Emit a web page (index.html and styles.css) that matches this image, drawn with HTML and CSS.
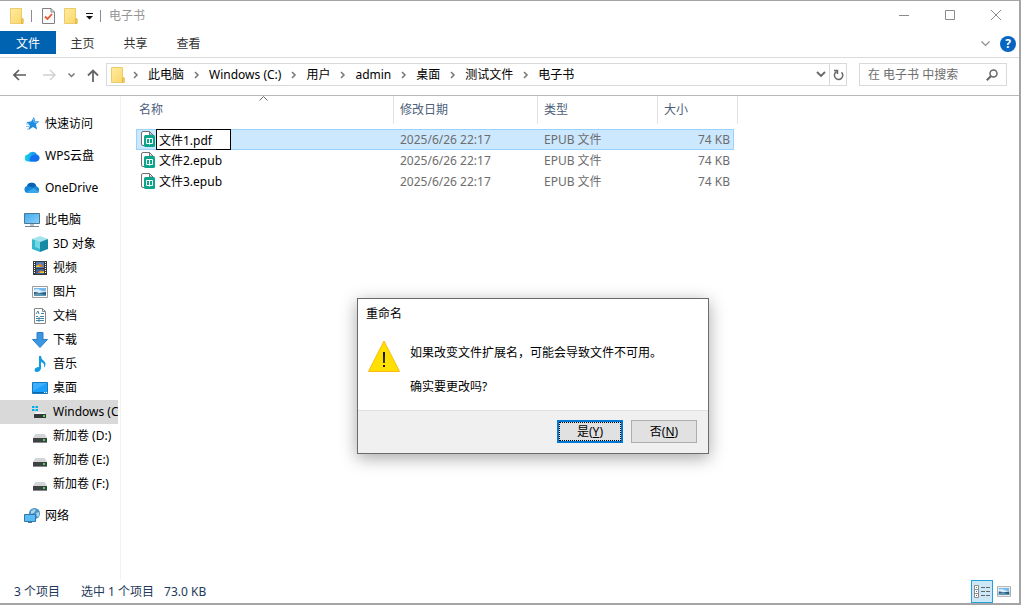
FILE: index.html
```html
<!doctype html>
<html lang="zh-CN">
<head>
    <meta charset="UTF-8">
    <meta name="viewport" content="width=device-width, initial-scale=1.0">
    <title>电子书</title>
    <link rel="stylesheet" href="styles.css">
</head>
<body>
<svg class="defs" aria-hidden="true">
    <defs>
        <linearGradient id="gold" x1="0" y1="0" x2="1" y2="1">
            <stop offset="0" stop-color="#ffeca0"/>
            <stop offset="1" stop-color="#fbd568"/>
        </linearGradient>
        <linearGradient id="screen" x1="0" y1="0" x2="1" y2="1">
            <stop offset="0" stop-color="#3fa9ee"/>
            <stop offset="1" stop-color="#8bd2fb"/>
        </linearGradient>
        <linearGradient id="wps" x1="0" y1="0" x2="1" y2="0">
            <stop offset="0" stop-color="#16d3e4"/>
            <stop offset="1" stop-color="#1479f5"/>
        </linearGradient>
    </defs>
    <symbol id="folder" viewBox="0 0 14 16">
        <path d="M.5.5h11v10h1.500v5H.5z" fill="url(#gold)" stroke="#eccb6b"/>
        <path d="M11.500 15.500v-4.500h1.500v4.500z" fill="#f9d76f" stroke="#e2b849"/>
    </symbol>
    <symbol id="crumb" viewBox="0 0 6 8">
        <path d="M1 1l3 3-3 3" fill="none" stroke="#777" stroke-width="1.500"/>
    </symbol>
    <symbol id="book" viewBox="0 0 14 16">
        <path d="M3 14.500H2A1.500 1.500 0 0 1 .5 13V2A1.500 1.500 0 0 1 2 .5h6.500l3.500 3.500v1M8.500.5V4H12" fill="#fff" stroke="#707070"/>
        <rect x="3" y="4" width="11" height="12" rx="1.500" fill="#0ca58b"/>
        <path d="M5.500 7.500h6v5h-6zM8.500 7.500v6" fill="none" stroke="#fff"/>
    </symbol>
    <symbol id="drive" viewBox="0 0 14 9">
        <path d="M2.500 0h9L14 4H0z" fill="#d2d4d5"/>
        <path d="M0 4h14v4H0z" fill="#3d4144"/>
        <path d="M0 8h14v1H0z" fill="#85898b"/>
        <path d="M10 5h2v2h-2z" fill="#38e848"/>
    </symbol>
    <symbol id="photo" viewBox="0 0 16 12">
        <path d="M.5.5h15v11H.5z" fill="#fff" stroke="#9b9b9b"/>
        <path d="M2 2h12v8H2z" fill="#75b9ec"/>
        <path d="M2 4q3-2 6 0t6 1v2H2z" fill="#d7edf9"/>
        <path d="M2 6q3 0 5 1l7-1v4H2z" fill="#26587c"/>
        <path d="M2 8l4-1 8 2v1H2z" fill="#5c96b3"/>
    </symbol>
</svg>

<div class="window">
    <header class="titlebar">
        <svg class="folder"><use href="#folder"/></svg>
        <span class="bar"></span>
        <button class="tool check" aria-label="属性">
            <svg width="13" height="16" viewBox="0 0 13 16">
                <path d="M.5.5h8.500l3.500 3.500v11.500H.5zM9 .5V4h3.500" fill="#fafafa" stroke="#808080"/>
                <path d="M3 8.500l2.500 2.500L10 6" fill="none" stroke="#e8542b" stroke-width="1.800"/>
            </svg>
        </button>
        <button class="tool" aria-label="新建文件夹"><svg class="folder"><use href="#folder"/></svg></button>
        <button class="tool more" aria-label="自定义快速访问工具栏">
            <svg width="7" height="7" viewBox="0 0 7 7"><path d="M0 0h7v1H0zM0 3h7L3.500 6.500z" fill="#111"/></svg>
        </button>
        <span class="bar"></span>
        <h1 class="title">电子书</h1>
        <div class="controls">
            <button class="control" aria-label="最小化"><svg width="12" height="12" viewBox="0 0 12 12"><path d="M1 5.500h10"/></svg></button>
            <button class="control" aria-label="最大化"><svg width="12" height="12" viewBox="0 0 12 12"><path d="M1.500.5h9v9h-9z"/></svg></button>
            <button class="control" aria-label="关闭"><svg width="12" height="12" viewBox="0 0 12 12"><path d="M1 0l10 10M11 0L1 10"/></svg></button>
        </div>
    </header>

    <nav class="tabs">
        <button class="tab active">文件</button>
        <button class="tab">主页</button>
        <button class="tab">共享</button>
        <button class="tab">查看</button>
        <div class="help">
            <button class="tool" aria-label="展开功能区">
                <svg width="9" height="6" viewBox="0 0 9 6"><path d="M.5.5l4 4 4-4" fill="none" stroke="#8c8c8c" stroke-width="1.200"/></svg>
            </button>
            <button class="question" aria-label="帮助">?</button>
        </div>
    </nav>

    <div class="navbar">
        <div class="arrows">
            <button class="tool" aria-label="返回"><svg width="13" height="12" viewBox="0 0 13 12"><path d="M13 6H1.500M6 1L1 6l5 5" fill="none" stroke="#5c5c5c" stroke-width="1.600"/></svg></button>
            <button class="tool" aria-label="前进"><svg width="13" height="12" viewBox="0 0 13 12"><path d="M0 6h11.500M7 1l5 5-5 5" fill="none" stroke="#d0d0d0" stroke-width="1.400"/></svg></button>
            <button class="tool recent" aria-label="最近位置"><svg width="7" height="5" viewBox="0 0 7 5"><path d="M.5.500l3 3 3-3" fill="none" stroke="#777" stroke-width="1.500"/></svg></button>
            <button class="tool" aria-label="上移"><svg width="12" height="13" viewBox="0 0 12 13"><path d="M6 13V1.500M1 6.500l5-5 5 5" fill="none" stroke="#666" stroke-width="1.800"/></svg></button>
        </div>
        <div class="address">
            <svg class="folder"><use href="#folder"/></svg>
            <svg class="crumb"><use href="#crumb"/></svg><a href="#pc">此电脑</a>
            <svg class="crumb"><use href="#crumb"/></svg><a href="#c">Windows (C:)</a>
            <svg class="crumb"><use href="#crumb"/></svg><a href="#users">用户</a>
            <svg class="crumb"><use href="#crumb"/></svg><a href="#admin">admin</a>
            <svg class="crumb"><use href="#crumb"/></svg><a href="#desktop">桌面</a>
            <svg class="crumb"><use href="#crumb"/></svg><a href="#test">测试文件</a>
            <svg class="crumb"><use href="#crumb"/></svg><a href="#books">电子书</a>
            <button class="tool drop" aria-label="历史记录"><svg width="10" height="7" viewBox="0 0 10 7"><path d="M1 1l4 4 4-4" fill="none" stroke="#666" stroke-width="1.800"/></svg></button>
            <button class="tool refresh" aria-label="刷新">
                <svg width="11" height="12" viewBox="0 0 11 12"><path d="M8.500 3.200A4.200 4.200 0 1 1 3.500 2.600M1 1.500h3.500V5" fill="none" stroke="#686868" stroke-width="1.500"/></svg>
            </button>
        </div>
        <div class="search">
            <input type="search" class="searchinput" placeholder="在 电子书 中搜索" aria-label="搜索">
            <button class="tool" aria-label="开始搜索"><svg width="12" height="12" viewBox="0 0 12 12"><circle cx="7.500" cy="4.500" r="3.500" fill="none" stroke="#666" stroke-width="1.500"/><path d="M5 7L.8 11.200" stroke="#666" stroke-width="2"/></svg></button>
        </div>
    </div>

    <main class="content">
        <nav class="sidebar">
            <a class="item top" href="#quick">
                <svg class="icon" viewBox="0 0 16 16"><path d="M10 1l1.200 4.300 4.300.1-3.600 2.800 1.200 5.300-4.200-2.600L4.500 14l1.300-4.500L2.500 6l4.600-.5z" fill="#1e8de0"/><path d="M2 8h3M2 10.500h3M3 13h2" stroke="#7dbff0"/><path d="M9.500 3l.7 3.300 3 .2" fill="none" stroke="#77c4f7"/></svg>
                快速访问</a>
            <a class="item top" href="#wps">
                <svg class="icon" viewBox="0 0 16 16"><path d="M4.500 13.500a3.500 3.500 0 0 1-.4-7 5 5 0 0 1 9-.1 3.700 3.700 0 0 1-.8 7.100z" fill="url(#wps)"/><path d="M6 13.500a5 5 0 0 1 9.500-3.500 3.700 3.700 0 0 1-3.200 3.500z" fill="#146ff0"/></svg>
                WPS云盘</a>
            <a class="item top" href="#onedrive">
                <svg class="icon" viewBox="0 0 16 16"><path d="M3.500 13A3.600 3.600 0 0 1 3 6a5 5 0 0 1 9.500.5A3.400 3.400 0 0 1 13 13z" fill="#1687d9"/><path d="M3 6a5 5 0 0 1 9.500.5q-1.600-.5-3 .9z" fill="#0b62b4"/><path d="M2 12.500l8-4.500 5 4q-1 1-2 1H4z" fill="#38a7eb"/></svg>
                OneDrive</a>
            <a class="item top" href="#pc">
                <svg class="icon" viewBox="0 0 16 16"><path d="M.5 1.500h15v10H.5z" fill="url(#screen)" stroke="#4c7692"/><path d="M6 12h4v2H6z" fill="#b4c3cc"/><path d="M1 14.500h14" stroke="#75838c"/></svg>
                此电脑</a>
            <a class="item" href="#3d">
                <svg class="icon" viewBox="0 0 16 16"><path d="M0 3l8-3 8 3-8 3z" fill="#a4e4ed"/><path d="M0 3l8 3v10l-8-3z" fill="#35b8cd"/><path d="M16 3L8 6v10l8-3z" fill="#168aa5"/><path d="M3 4l5 2v7l-5-2z" fill="#70d7e5"/></svg>
                3D 对象</a>
            <a class="item" href="#video">
                <svg class="icon" viewBox="0 0 16 16"><path d="M1 1h14v14H1z" fill="#383838"/><path d="M4 2h8v6H4z" fill="#497dc1"/><path d="M4 9h8v5H4z" fill="#3a62a1"/><path d="M5 6l3-3 3 3v1H5zM6 12l3-2 2 3H6z" fill="#df7a2b"/><path d="M4 6l2-1 2 2H4zM8 12l4-1v2H8z" fill="#e5cb37"/><path d="M2.500 2v12M13.500 2v12" stroke="#fff" stroke-dasharray="1 1"/></svg>
                视频</a>
            <a class="item" href="#pictures"><svg class="icon"><use href="#photo"/></svg>图片</a>
            <a class="item" href="#documents">
                <svg class="icon" viewBox="0 0 16 16"><path d="M2.500.5h8l3 3v12h-11zM10.500.5v3h3" fill="#fff" stroke="#888"/><path d="M4 6l2-3 1 3M9 5.500h3M4 8.500h2M8 8.500h4M4 10.500h8M4 12.500h8M7 14v-5" fill="none" stroke="#4288ac"/></svg>
                文档</a>
            <a class="item" href="#downloads">
                <svg class="icon" viewBox="0 0 16 16"><path d="M5 .5h6v7h4.500L8 15.500.5 7.500H5z" fill="#3a96df" stroke="#2b7fc7"/></svg>
                下载</a>
            <a class="item" href="#music">
                <svg class="icon" viewBox="0 0 16 16"><path d="M7 0h2q0 3 3 5 3 3 0 7 1-5-3-6v6.500q-1 3.500-4.500 3.500-2-.2-2-2Q3 11 7 11z" fill="#109be2"/></svg>
                音乐</a>
            <a class="item" href="#desktop">
                <svg class="icon" viewBox="0 0 16 16"><path d="M.5 2.500h15v11H.5z" fill="#1a9ffb" stroke="#1478bb"/><path d="M1 3h14L1 11z" fill="#3caffe"/><path d="M1 12.500h11" stroke="#1169a8"/><path d="M12 12.500h3" stroke="#fff" stroke-dasharray="1 1"/></svg>
                桌面</a>
            <a class="item selected" href="#c">
                <svg class="icon" viewBox="0 0 16 16"><path d="M0 2h2.500v2H0zM3.500 2H6v2H3.500zM0 5h2.500v2H0zM3.500 5H6v2H3.500z" fill="#00aeea"/><path d="M4 8h8l2 2H2z" fill="#f0f0f0"/><path d="M2 10h12v4H2z" fill="#34383a"/><path d="M11 11h2v2h-2z" fill="#39e64a"/></svg>
                Windows (C:)</a>
            <a class="item" href="#d"><svg class="icon drive"><use href="#drive"/></svg>新加卷 (D:)</a>
            <a class="item" href="#e"><svg class="icon drive"><use href="#drive"/></svg>新加卷 (E:)</a>
            <a class="item" href="#f"><svg class="icon drive"><use href="#drive"/></svg>新加卷 (F:)</a>
            <a class="item top" href="#network">
                <svg class="icon" viewBox="0 0 16 16"><circle cx="10.500" cy="5.500" r="5.500" fill="#4b91c5"/><path d="M7 3q3-3 5-1l-2 3-3 1zM12 5l3-1v4l-2 1z" fill="#a8d4ea"/><path d="M.5 6.500h11v7H.5z" fill="#5abcf5" stroke="#2f78a8"/><path d="M4 14h4v1H4z" fill="#567d94"/></svg>
                网络</a>
        </nav>

        <section class="files">
            <table class="list">
                <colgroup>
                    <col class="colname"><col class="coldate"><col class="coltype"><col class="colsize"><col class="colend">
                </colgroup>
                <thead>
                <tr>
                    <th>名称<svg class="sort" viewBox="0 0 9 5"><path d="M.5 4.500l4-4 4 4" fill="none" stroke="#666"/></svg></th>
                    <th>修改日期</th>
                    <th>类型</th>
                    <th colspan="2">大小</th>
                </tr>
                </thead>
                <tbody>
                <tr class="chosen">
                    <td><div class="name"><svg class="book"><use href="#book"/></svg><input class="rename" type="text" value="文件1.pdf" aria-label="文件名"></div></td>
                    <td>2025/6/26 22:17</td>
                    <td>EPUB 文件</td>
                    <td class="size">74 KB</td>
                </tr>
                <tr>
                    <td><div class="name"><svg class="book"><use href="#book"/></svg><span>文件2.epub</span></div></td>
                    <td>2025/6/26 22:17</td>
                    <td>EPUB 文件</td>
                    <td class="size">74 KB</td>
                </tr>
                <tr>
                    <td><div class="name"><svg class="book"><use href="#book"/></svg><span>文件3.epub</span></div></td>
                    <td>2025/6/26 22:17</td>
                    <td>EPUB 文件</td>
                    <td class="size">74 KB</td>
                </tr>
                </tbody>
            </table>
        </section>
    </main>

    <footer class="status">
        <span>3 个项目</span>
        <span>选中 1 个项目</span>
        <span>73.0 KB</span>
        <div class="views">
            <button class="view on" aria-label="详细信息">
                <svg width="16" height="13" viewBox="0 0 16 13"><path d="M.5.5h4v12h-4zM.5 4.500h4M.5 8.500h4" fill="#fff" stroke="#8d8d8d"/><path d="M7 2.500h4M12 2.500h4M7 6.500h4M12 6.500h4M7 10.500h4M12 10.500h4" stroke="#666"/><path d="M2 2h1v1H2z" fill="#4a9a4a"/><path d="M2 6h1v1H2z" fill="#3572c0"/><path d="M2 10h1v1H2z" fill="#c33"/></svg>
            </button>
            <button class="view" aria-label="大缩略图"><svg width="14" height="11"><use href="#photo"/></svg></button>
        </div>
    </footer>
</div>

<div class="dialog" role="dialog" aria-labelledby="dialogtitle">
    <h2 class="dialogtitle" id="dialogtitle">重命名</h2>
    <div class="message">
        <svg class="warning" viewBox="0 0 32 32">
            <path d="M16 1L31.500 31.500H.5z" fill="#ffe000" stroke="#fdb813"/>
            <path d="M15 12h2l-.2 11h-1.600zM15 25h2v2h-2z" fill="#111"/>
        </svg>
        <div class="words">
            <p>如果改变文件扩展名，可能会导致文件不可用。</p>
            <p>确实要更改吗?</p>
        </div>
    </div>
    <div class="buttons">
        <button class="button primary">是(<u>Y</u>)</button>
        <button class="button">否(<u>N</u>)</button>
    </div>
</div>
</body>
</html>
```
FILE: styles.css
```css
* {
    box-sizing: border-box;
}

body {
    margin: 0;
    height: 100vh;
    overflow: hidden;
    position: relative;
    background: #fff;
    color: #000;
    font: 12px/20px "Noto Sans", "Noto Sans CJK SC", sans-serif;
}

button, input {
    font: inherit;
    color: inherit;
    margin: 0;
    padding: 0;
    border: 0;
    background: none;
}

a {
    color: inherit;
    text-decoration: none;
    white-space: nowrap;
}

svg {
    display: block;
    flex: none;
}

.defs {
    position: absolute;
    width: 0;
    height: 0;
}

.window {
    height: 100%;
    display: flex;
    flex-direction: column;
    background: #fff;
    border: solid #a5a5a5;
    border-width: 1px 2px 2px 0;
}

.folder {
    width: 14px;
    height: 16px;
}

.tool {
    display: flex;
    align-items: center;
    justify-content: center;
}

/* title bar */
.titlebar {
    height: 30px;
    display: flex;
    align-items: center;
    padding-left: 10px;
}

.bar {
    width: 1px;
    height: 12px;
    margin: 0 10px 0 7px;
    background: #8c8c8c;
}

.check {
    margin-right: 9px;
}

.more {
    margin-left: 8px;
}

.titlebar .more + .bar {
    margin-right: 8px;
}

.title {
    margin: 0;
    font-size: 12px;
    font-weight: normal;
    color: #959595;
}

.controls {
    margin-left: auto;
    display: flex;
}

.control {
    width: 46px;
    height: 29px;
    display: flex;
    align-items: center;
    justify-content: center;
    fill: none;
    stroke: #8a8a8a;
}

/* ribbon tabs */
.tabs {
    height: 27px;
    display: flex;
    align-items: flex-start;
    border-bottom: 1px solid #dadbdc;
}

.tab {
    width: 53px;
    height: 24px;
    padding-top: 2px;
    color: #333;
}

.tab.active {
    width: 56px;
    height: 23px;
    background: #0063b1;
    color: #fff;
}

.help {
    margin-left: auto;
    padding: 5px 3px 0 0;
    display: flex;
    gap: 10px;
}

.question {
    width: 16px;
    height: 16px;
    border-radius: 50%;
    background: #0765c1;
    color: #fff;
    font-weight: bold;
    line-height: 16px;
}

/* navigation bar */
.navbar {
    height: 38px;
    display: flex;
    align-items: flex-start;
    padding: 5px 12px 0 0;
    border-bottom: 1px solid #b8b8b8;
}

.arrows {
    width: 106px;
    height: 24px;
    padding-left: 13px;
    display: flex;
    align-items: center;
    gap: 17px;
}

.recent {
    margin: 0 -5px;
}

.address {
    flex: 1;
    height: 23px;
    display: flex;
    align-items: center;
    padding-left: 4px;
    border: 1px solid #d9d9d9;
}

.crumb {
    width: 6px;
    height: 8px;
    margin: 0 9px 0 10px;
}

.folder + .crumb {
    margin-left: 8px;
}

.drop {
    width: 16px;
    height: 21px;
    margin-left: auto;
}

.refresh {
    width: 17px;
    height: 21px;
    border-left: 1px solid #d9d9d9;
}

.search {
    width: 148px;
    height: 23px;
    margin-left: 12px;
    padding: 0 8px;
    display: flex;
    align-items: center;
    border: 1px solid #d9d9d9;
}

.searchinput {
    flex: 1;
    min-width: 0;
    outline: 0;
}

.searchinput::placeholder {
    color: #6d6d6d;
}

/* body of the window */
.content {
    flex: 1;
    min-height: 0;
    display: flex;
}

.sidebar {
    width: 121px;
    padding: 12px 2px 0 0;
    border-right: 1px solid #f2f2f2;
}

.item {
    height: 24px;
    padding-left: 32px;
    display: flex;
    align-items: center;
    gap: 5px;
    overflow: hidden;
}

.item.top {
    height: 32px;
    padding-left: 24px;
}

.item.top + .item:not(.top) {
    margin-top: -4px;
}

.item:not(.top) + .top {
    margin-top: 4px;
}

.item.selected {
    background: #d9d9d9;
}

.icon {
    width: 16px;
    height: 16px;
}

.drive {
    height: 9px;
    margin-top: 5px;
}

.files {
    flex: 1;
    padding-left: 15px;
}

.list {
    table-layout: fixed;
    width: 602px;
    border-collapse: separate;
    border-spacing: 0;
}

.colname {
    width: 258px;
}

.coldate {
    width: 144px;
}

.coltype {
    width: 120px;
}

.colsize {
    width: 76px;
}

.colend {
    width: 4px;
}

th {
    position: relative;
    height: 28px;
    padding: 0 0 0 6px;
    border-right: 1px solid #e2e2e2;
    text-align: left;
    font-weight: normal;
    color: #4c607a;
}

th:first-child {
    padding-left: 3px;
}

.sort {
    position: absolute;
    top: 0;
    left: 50%;
    width: 9px;
    height: 5px;
    margin-left: -6px;
}

tbody::before {
    content: "";
    display: block;
    height: 5px;
}

td {
    height: 21px;
    padding: 0 0 0 6px;
    line-height: 19px;
    color: #6d6d6d;
}

.chosen td {
    background: #cce8ff;
    border: solid #99d1ff;
    border-width: 1px 0;
}

.chosen td:first-child {
    border-left-width: 1px;
    padding-left: 4px;
}

.chosen .size {
    border-right-width: 1px;
    padding-right: 3px;
}

td:first-child {
    padding-left: 5px;
    color: #000;
}

.size {
    padding-right: 4px;
    text-align: right;
}

.name {
    display: flex;
    align-items: center;
    gap: 4px;
    height: 19px;
}

.book {
    width: 14px;
    height: 16px;
    margin-bottom: 1px;
}

.rename {
    width: 75px;
    height: 21px;
    margin: -1px 0 -1px -3px;
    padding-left: 2px;
    border: 1px solid #000;
    background: #fff;
    outline: 0;
}

/* status bar */
.status {
    height: 23px;
    display: flex;
    align-items: center;
    padding: 0 4px 0 14px;
    color: #1e395b;
}

.status span {
    margin-right: 10px;
}

.status span:first-child {
    margin-right: 21px;
}

.views {
    margin-left: auto;
    display: flex;
}

.view {
    width: 22px;
    height: 23px;
    display: flex;
    align-items: center;
    justify-content: center;
}

.view.on {
    background: #cce8f6;
    border: 1px solid #26a0da;
}

/* rename dialog */
.dialog {
    position: absolute;
    left: 357px;
    top: 298px;
    width: 352px;
    background: #fff;
    border: 1px solid #6b6b6b;
    box-shadow: 0 4px 16px rgba(0, 0, 0, .35);
}

.dialogtitle {
    margin: 0;
    padding: 5px 8px;
    font-size: 12px;
    font-weight: normal;
}

.message {
    display: flex;
    gap: 10px;
    padding: 11px 10px 13px;
}

.warning {
    width: 32px;
    height: 32px;
}

.words p {
    margin: 0 0 14px;
    line-height: 20px;
    white-space: nowrap;
}

.words p:first-child {
    margin-top: 3px;
}

.words p:last-child {
    margin-bottom: 0;
}

.buttons {
    display: flex;
    justify-content: flex-end;
    gap: 8px;
    padding: 9px 11px 10px;
    background: #f0f0f0;
    border-top: 1px solid #dfdfdf;
}

.button {
    width: 66px;
    height: 23px;
    background: #e1e1e1;
    border: 1px solid #adadad;
}

.primary {
    border: 2px solid #0078d7;
    outline: 1px dotted #000;
    outline-offset: -3px;
}
```
